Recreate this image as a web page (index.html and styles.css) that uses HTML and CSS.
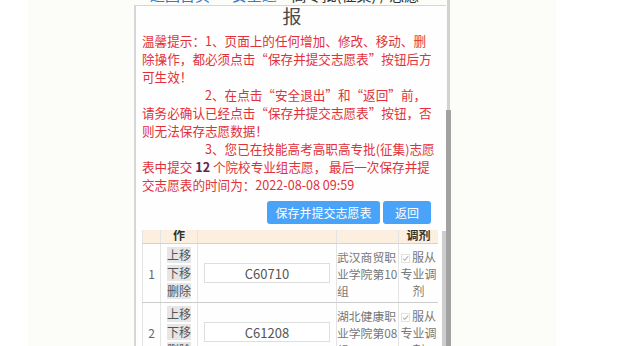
FILE: index.html
```html
<!DOCTYPE html>
<html lang="zh-CN">
<head>
    <meta charset="utf-8">
    <title>志愿填报</title>
    <link rel="stylesheet" href="styles.css">
</head>
<body>
    <div class="stage">
        <div class="phone">
            <div class="viewport">
                <div class="topstrip">
                    <div class="topline">
                        <span class="links">返回首页 · 安全退出</span>
                        <span class="head">高专批(征集) / 志愿填</span>
                    </div>
                </div>
                <div class="box">
                    <h1 class="title">报</h1>
                    <div class="tips">
                        <p>温馨提示：1、页面上的任何增加、修改、移动、删除操作，都必须点击“保存并提交志愿表”按钮后方可生效！</p>
                        <p class="indent">2、在点击“安全退出”和“返回”前，请务必确认已经点击“保存并提交志愿表”按钮，否则无法保存志愿数据！</p>
                        <p class="indent">3、您已在技能高考高职高专批(征集)志愿表中提交 <b class="num">12</b> 个院校专业组志愿， 最后一次保存并提交志愿表的时间为：2022-08-08 09:59</p>
                    </div>
                    <div class="actions">
                        <button class="btn btn-save">保存并提交志愿表</button>
                        <button class="btn btn-back">返回</button>
                    </div>
                    <div class="grid-wrap">
                        <div class="grid-scroll">
                            <table>
                                <colgroup>
                                    <col class="c-no">
                                    <col class="c-op">
                                    <col class="c-code">
                                    <col class="c-name">
                                    <col class="c-adj">
                                </colgroup>
                                <thead>
                                    <tr>
                                        <th>序号</th>
                                        <th>操<br>作</th>
                                        <th>院校专业组代码</th>
                                        <th>院校名称</th>
                                        <th>是否服从<br>调剂</th>
                                    </tr>
                                </thead>
                                <tbody>
                                    <tr>
                                        <td>1</td>
                                        <td>
                                            <button class="move">上移</button>
                                            <button class="move">下移</button>
                                            <button class="move">删除</button>
                                        </td>
                                        <td><input class="code" type="text" value="C60710"></td>
                                        <td class="name">武汉商贸职业学院第10组</td>
                                        <td class="adj">
                                            <svg class="tick" width="9" height="9" viewBox="0 0 9 9"><rect x="0.5" y="0.5" width="8" height="8" fill="#fff" stroke="#e2e2e2"/><path d="M2 4.6 L3.8 6.4 L7.2 2.4" fill="none" stroke="#b9b9b9" stroke-width="1.3"/></svg>服从专业调剂
                                        </td>
                                    </tr>
                                    <tr>
                                        <td>2</td>
                                        <td>
                                            <button class="move">上移</button>
                                            <button class="move">下移</button>
                                            <button class="move">删除</button>
                                        </td>
                                        <td><input class="code" type="text" value="C61208"></td>
                                        <td class="name">湖北健康职业学院第08组</td>
                                        <td class="adj">
                                            <svg class="tick" width="9" height="9" viewBox="0 0 9 9"><rect x="0.5" y="0.5" width="8" height="8" fill="#fff" stroke="#e2e2e2"/><path d="M2 4.6 L3.8 6.4 L7.2 2.4" fill="none" stroke="#b9b9b9" stroke-width="1.3"/></svg>服从专业调剂
                                        </td>
                                    </tr>
                                </tbody>
                            </table>
                        </div>
                        <div class="inner-bar"></div>
                    </div>
                </div>
            </div>
            <div class="outer-bar">
                <div class="track"></div>
                <div class="thumb"></div>
            </div>
        </div>
    </div>
</body>
</html>
```

FILE: styles.css
```css
html, body {
    margin: 0;
    height: 346px;
    overflow: hidden;
}
body {
    background: linear-gradient(to right, #ffffff 0, #ffffff 28px, #fcfcf9 28px, #fcfcf9 556px, #ffffff 556px);
    font-family: "Noto Sans CJK SC", "Noto Sans", sans-serif;
}
.stage {
    display: flex;
    padding-left: 134px;
}
.phone {
    display: flex;
    width: 317px;
    height: 346px;
}
.viewport {
    flex: 1;
    display: flex;
    flex-direction: column;
    overflow: hidden;
    background-color: #fefefe;
}
.topstrip {
    height: 5px;
    overflow: hidden;
    background-color: #fcfcf9;
}
.topline {
    display: flex;
    margin-top: -15px;
    line-height: 20px;
    font-size: 15px;
}
.links {
    padding-left: 16px;
    color: #3a78c8;
}
.head {
    margin-left: auto;
    padding-right: 12px;
    color: #333;
}
.box {
    flex: 1;
    min-height: 0;
    display: flex;
    flex-direction: column;
    border-left: 2px solid #d6d6d6;
    border-top: 1px solid #d6d6d6;
    padding-left: 6px;
}
.title {
    margin: 0;
    font-size: 19px;
    line-height: 20px;
    font-weight: normal;
    color: #4a4a4a;
    text-align: center;
    padding-right: 4px;
}
.tips {
    margin-top: 6px;
    width: 295px;
    font-size: 12.6px;
    line-height: 18px;
    color: #e2303a;
}
.tips p {
    margin: 0;
}
.tips .indent {
    text-indent: 63px;
}
.num {
    color: #6b1d4f;
}
.actions {
    display: flex;
    justify-content: flex-end;
    gap: 3px;
    margin-top: 7px;
    padding-right: 15px;
}
.btn {
    height: 23px;
    padding: 0;
    border: none;
    border-radius: 3px;
    background-color: #49a3f8;
    color: #fff;
    font-family: inherit;
    font-size: 12px;
}
.btn-save {
    width: 113px;
}
.btn-back {
    width: 48px;
}
.grid-wrap {
    flex: 1;
    min-height: 0;
    display: flex;
    gap: 4px;
    margin-top: 6px;
}
.grid-scroll {
    width: 296px;
    overflow: hidden;
}
.inner-bar {
    width: 4px;
    margin-top: 1px;
    background-color: #cdcdcd;
}
table {
    width: 296px;
    margin-top: -18px;
    border-collapse: collapse;
    table-layout: fixed;
    font-size: 12px;
    color: #666;
}
.c-no { width: 18px; }
.c-op { width: 37px; }
.c-code { width: 139px; }
.c-name { width: 62px; }
.c-adj { width: 40px; }
th {
    background-color: #fcefdf;
    color: #333;
    font-weight: bold;
    line-height: 14px;
    padding: 1px 0;
    vertical-align: top;
    white-space: nowrap;
    overflow: hidden;
    border: 1px solid #e4e4e4;
    border-bottom-color: #d2d2d2;
}
td {
    padding: 1px 0;
    text-align: center;
    vertical-align: middle;
    border: 1px solid #e4e4e4;
    border-bottom: 1px solid #cccccc;
}
.move {
    display: block;
    width: 24px;
    height: 16px;
    margin: 2px auto;
    padding: 0;
    border: none;
    background-color: #e6e6e6;
    color: #555;
    font-family: inherit;
    font-size: 12px;
    line-height: 16px;
}
.code {
    box-sizing: border-box;
    width: 126px;
    height: 20px;
    border: 1px solid #dedede;
    text-align: center;
    font-family: inherit;
    font-size: 13px;
    color: #555;
    background-color: #fff;
}
.name {
    text-align: left;
    font-size: 11.8px;
    line-height: 17px;
    color: #777;
}
.adj {
    line-height: 17px;
    color: #777;
}
.tick {
    margin-right: 2px;
    vertical-align: -1px;
}
.outer-bar {
    width: 5px;
    display: flex;
    flex-direction: column;
}
.track {
    height: 110px;
    background: linear-gradient(to right, transparent 0, transparent 1px, #d2d2d2 1px, #d2d2d2 4px, transparent 4px);
}
.thumb {
    flex: 1;
    background-color: #a2a2a2;
}
```
